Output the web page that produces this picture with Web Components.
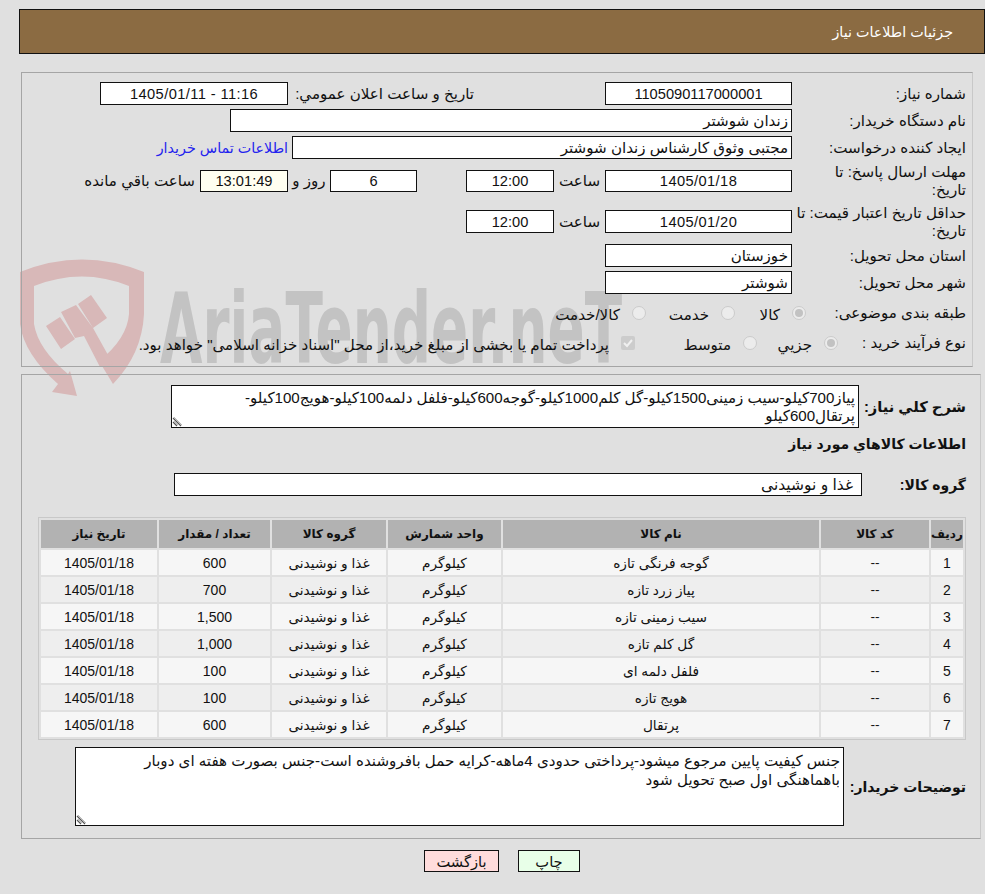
<!DOCTYPE html>
<html lang="fa" dir="rtl">
<head>
<meta charset="utf-8">
<title>جزئیات اطلاعات نیاز</title>
<style>
html, body { margin: 0; background: #e0e0e0; }
body { width: 985px; height: 894px; overflow: hidden; }
</style>
</head>
<body>
<need-page></need-page>

<script>
const FONT = '"Liberation Sans", "DejaVu Sans", "Noto Sans", sans-serif';

class TitleBar extends HTMLElement {
    constructor() {
        super();
        this.attachShadow({ mode: 'open' });
        this.shadowRoot.innerHTML = `
            <style>
                :host { display: flex; align-items: center; box-sizing: border-box; height: 45px; margin: 9px 0 0 19px; padding-right: 31px; background: #8b6b42; border: 1px solid #111; color: #fff; font-size: 14.3px; }
            </style>
            <slot></slot>`;
    }
}

class PanelBox extends HTMLElement {
    constructor() {
        super();
        this.attachShadow({ mode: 'open' });
        this.shadowRoot.innerHTML = `
            <style>
                :host { display: block; box-sizing: border-box; border: 1px solid #a5a5a5; border-right-color: #c8c8c8; }
            </style>
            <slot></slot>`;
    }
}

class FieldBox extends HTMLElement {
    constructor() {
        super();
        this.attachShadow({ mode: 'open' });
        this.shadowRoot.innerHTML = `
            <style>
                :host { display: flex; align-items: center; justify-content: center; box-sizing: border-box; background: #fff; border: 1px solid #111; height: 23px; flex: none; white-space: nowrap; }
                :host([start]) { justify-content: flex-start; padding-right: 3px; }
                :host([warm]) { background: #fffff0; }
                :host([num]) { font-size: 14.67px; }
                :host([date]) { font-size: 14.67px; letter-spacing: .4px; }
            </style>
            <slot></slot>`;
    }
    connectedCallback() {
        if (this.hasAttribute('w')) this.style.width = this.getAttribute('w') + 'px';
    }
}

class ResizeArea extends HTMLElement {
    constructor() {
        super();
        this.attachShadow({ mode: 'open' });
        this.shadowRoot.innerHTML = `
            <style>
                :host { display: block; position: relative; box-sizing: border-box; background: #fff; border: 1px solid #111; padding: 3px; font-size: 15.1px; line-height: 18px; flex: none; white-space: nowrap; }
                svg { position: absolute; left: 0; bottom: 0; }
            </style>
            <slot></slot>
            <svg width="11" height="11" viewBox="0 0 11 11"><path d="M1 2l8 8M1 6l4 4" stroke="#555" stroke-width="1.2" fill="none"/><path d="M2 1l8 8M2 5l4 4" stroke="#bbb" stroke-width="1" fill="none"/></svg>`;
    }
}

class RadioMark extends HTMLElement {
    constructor() {
        super();
        this.attachShadow({ mode: 'open' });
        this.shadowRoot.innerHTML = `
            <style>
                :host { display: inline-block; box-sizing: border-box; width: 14px; height: 14px; flex: none; border-radius: 50%; border: 1px solid #cbcbcb; background: #ececec; position: relative; }
                :host([on])::after { content: ""; position: absolute; inset: 2px; border-radius: 50%; background: #c2c2c2; }
            </style>`;
    }
}

class CheckMark extends HTMLElement {
    constructor() {
        super();
        this.attachShadow({ mode: 'open' });
        this.shadowRoot.innerHTML = `
            <style>
                :host { display: inline-block; width: 14px; height: 14px; flex: none; }
                svg { display: block; }
            </style>
            <svg width="14" height="14" viewBox="0 0 14 14"><rect width="14" height="14" rx="2" fill="#cccccc"/><path d="M3 7l3 3 5-6" stroke="#f0f0f0" stroke-width="2" fill="none"/></svg>`;
    }
}

// logo behind the form, it overlaps both panels
class WaterMark extends HTMLElement {
    constructor() {
        super();
        this.attachShadow({ mode: 'open' });
        this.shadowRoot.innerHTML = `
            <style>
                :host { display: block; position: absolute; left: 0; top: 0; z-index: -1; width: 640px; height: 400px; }
                svg { display: block; }
                .name { position: absolute; left: 160px; top: 265px; direction: ltr; white-space: nowrap; color: #c3c3c3; font: bold 98px/110px "DejaVu Sans", sans-serif; transform-origin: 0 0; transform: scaleX(.56); }
            </style>
            <svg width="640" height="400" viewBox="0 0 640 400">
                <path fill="#d8b8b8" fill-rule="evenodd" d="M20 263Q82 238 144 263V305Q142 345 113 375L99 352Q127 330 129 305V277Q82 258 34 277V315Q38 340 68 365L70 362L77 387L52 383L58 375Q24 345 20 315Z"/>
                <path fill="#d8b8b8" d="M46 317L60 308L75 330L61 340ZM61 303L76 296L93 319L113 355L100 358L84 327L75 329ZM78 295L91 286L107 309L93 319Z"/>
            </svg>
            <div class="name">AriaTender.neT</div>`;
    }
}

class GoodsTable extends HTMLElement {
    constructor() {
        super();
        this.attachShadow({ mode: 'open' });
        const rows = [
            ['1', 'گوجه فرنگی تازه', '600'],
            ['2', 'پیاز زرد تازه', '700'],
            ['3', 'سیب زمینی تازه', '1,500'],
            ['4', 'گل کلم تازه', '1,000'],
            ['5', 'فلفل دلمه ای', '100'],
            ['6', 'هویج تازه', '100'],
            ['7', 'پرتقال', '600']
        ];
        const body = rows.map((r, i) => `
            <tr class="${i % 2 ? 'even' : 'odd'}">
                <td class="n">${r[0]}</td><td>--</td><td>${r[1]}</td><td>کیلوگرم</td><td>غذا و نوشیدنی</td><td class="n">${r[2]}</td><td class="n">1405/01/18</td>
            </tr>`).join('');
        this.shadowRoot.innerHTML = `
            <style>
                :host { display: block; box-sizing: border-box; width: 928px; border: 1px solid #c8c8c8; }
                table { width: 100%; border-collapse: separate; border-spacing: 2px; table-layout: fixed; font-size: 13.7px; }
                th { background: #b2b2b2; height: 28px; padding: 0; font-size: 12px; font-weight: bold; }
                td { height: 25px; padding: 0; text-align: center; }
                td.n { font-size: 14px; }
                .odd td { background: #f6f6f6; }
                .even td { background: #eeeeee; }
            </style>
            <table>
                <colgroup><col style="width:32px"><col style="width:108px"><col style="width:316px"><col style="width:113px"><col style="width:114px"><col style="width:111px"><col></colgroup>
                <tr><th>رديف</th><th>کد کالا</th><th>نام کالا</th><th>واحد شمارش</th><th>گروه کالا</th><th>تعداد / مقدار</th><th>تاريخ نياز</th></tr>
                ${body}
            </table>`;
    }
}

class NeedPage extends HTMLElement {
    constructor() {
        super();
        this.attachShadow({ mode: 'open' });
        this.shadowRoot.innerHTML = `
            <style>
                :host { display: block; position: relative; z-index: 0; font-family: ${FONT}; font-size: 15.1px; color: #111; }
                .top { margin: 18px 12px 0 21px; height: 295px; padding-top: 9px; }
                .row { display: flex; align-items: center; height: 23px; margin-bottom: 4px; }
                .lab { width: 180px; flex: none; padding-right: 6px; box-sizing: border-box; line-height: 18px; white-space: nowrap; }
                .txt { flex: none; white-space: nowrap; }
                a { color: #2323ee; text-decoration: none; font-size: 14.3px; }
                .opt { display: flex; align-items: center; gap: 12px; flex: none; }
                .opt span { position: relative; top: 2px; white-space: nowrap; }
                .bottom { margin: 7px 4px 0 21px; height: 465px; padding: 10px 14px 0 0; font-size: 14px; }
                .bottom .row { margin-bottom: 0; }
                .lab2 { flex: none; font-weight: bold; white-space: nowrap; }
                .actions { display: flex; justify-content: center; gap: 19px; margin-top: 11px; padding-left: 19px; direction: ltr; }
                .btn { box-sizing: border-box; height: 22px; border: 1px solid #111; font-size: 14.67px; display: flex; align-items: center; justify-content: center; direction: rtl; }
            </style>

            <water-mark></water-mark>
            <title-bar>جزئیات اطلاعات نیاز</title-bar>

            <panel-box class="top">
                <div class="row">
                    <div class="lab">شماره نیاز:</div>
                    <field-box w="187" num>1105090117000001</field-box>
                    <span class="txt" style="width:186px;margin-right:131px">تاریخ و ساعت اعلان عمومي:</span>
                    <field-box w="188" date><span dir="ltr">1405/01/11 - 11:16</span></field-box>
                </div>
                <div class="row">
                    <div class="lab">نام دستگاه خریدار:</div>
                    <field-box w="562" start>زندان شوشتر</field-box>
                </div>
                <div class="row" style="margin-bottom:11px">
                    <div class="lab">ایجاد کننده درخواست:</div>
                    <field-box w="500" start>مجتبی وثوق کارشناس زندان شوشتر</field-box>
                    <a class="txt" style="margin-right:4px" href="#">اطلاعات تماس خریدار</a>
                </div>
                <div class="row" style="height:22px;margin-bottom:18px">
                    <div class="lab">مهلت ارسال پاسخ: تا<br>تاریخ:</div>
                    <field-box w="187" date style="height:22px">1405/01/18</field-box>
                    <span class="txt" style="width:51px;text-align:center">ساعت</span>
                    <field-box w="88" num style="height:22px">12:00</field-box>
                    <span style="width:49px;flex:none"></span>
                    <field-box w="87" num style="height:22px">6</field-box>
                    <span class="txt" style="width:42px;text-align:center">روز و</span>
                    <field-box w="88" num warm style="height:22px">13:01:49</field-box>
                    <span class="txt" style="margin-right:5px">ساعت باقي مانده</span>
                </div>
                <div class="row" style="margin-bottom:11px">
                    <div class="lab">حداقل تاریخ اعتبار قیمت: تا<br>تاریخ:</div>
                    <field-box w="187" date>1405/01/20</field-box>
                    <span class="txt" style="width:51px;text-align:center">ساعت</span>
                    <field-box w="88" num>12:00</field-box>
                </div>
                <div class="row">
                    <div class="lab">استان محل تحویل:</div>
                    <field-box w="187" start>خوزستان</field-box>
                </div>
                <div class="row" style="margin-bottom:7px">
                    <div class="lab">شهر محل تحویل:</div>
                    <field-box w="187" start>شوشتر</field-box>
                </div>
                <div class="row" style="margin-bottom:7px">
                    <div class="lab" style="width:166px">طبقه بندی موضوعی:</div>
                    <div class="opt" style="width:71px"><radio-mark on></radio-mark><span>کالا</span></div>
                    <div class="opt" style="width:89px"><radio-mark></radio-mark><span>خدمت</span></div>
                    <div class="opt"><radio-mark></radio-mark><span>کالا/خدمت</span></div>
                </div>
                <div class="row">
                    <div class="lab" style="width:134px">نوع فرآیند خرید :</div>
                    <div class="opt" style="width:81px"><radio-mark on></radio-mark><span>جزیي</span></div>
                    <div class="opt" style="width:122px"><radio-mark></radio-mark><span>متوسط</span></div>
                    <div class="opt"><check-mark></check-mark><span>پرداخت تمام یا بخشی از مبلغ خرید،از محل "اسناد خزانه اسلامی" خواهد بود.</span></div>
                </div>
            </panel-box>

            <panel-box class="bottom">
                <div class="row" style="height:43px">
                    <div class="lab2" style="width:107px;font-size:14.7px">شرح کلي نیاز:</div>
                    <resize-area style="width:688px;height:43px">پیاز700کیلو-سیب زمینی1500کیلو-گل کلم1000کیلو-گوجه600کیلو-فلفل دلمه100کیلو-هویج100کیلو-<br>پرتقال600کیلو</resize-area>
                </div>
                <div class="row" style="height:20px;margin-top:6px"><div class="lab2">اطلاعات کالاهاي مورد نياز</div></div>
                <div class="row" style="margin-top:19px">
                    <div class="lab2" style="width:104px">گروه کالا:</div>
                    <field-box w="688" start style="padding-right:8px;font-size:15.5px">غذا و نوشیدنی</field-box>
                </div>
                <goods-table style="margin-top:21px"></goods-table>
                <div class="row" style="height:79px;margin-top:7px">
                    <div class="lab2" style="width:122px">توضیحات خریدار:</div>
                    <resize-area style="width:769px;height:79px;line-height:19px">جنس کیفیت پایین مرجوع میشود-پرداختی حدودی 4ماهه-کرایه حمل بافروشنده است-جنس بصورت هفته ای دوبار<br>باهماهنگی اول صبح تحویل شود</resize-area>
                </div>
            </panel-box>

            <div class="actions">
                <div class="btn" style="width:75px;background:#ffdcdc">بازگشت</div>
                <div class="btn" style="width:62px;background:#e8ffe8">چاپ</div>
            </div>`;
    }
}

customElements.define('title-bar', TitleBar);
customElements.define('panel-box', PanelBox);
customElements.define('field-box', FieldBox);
customElements.define('resize-area', ResizeArea);
customElements.define('radio-mark', RadioMark);
customElements.define('check-mark', CheckMark);
customElements.define('water-mark', WaterMark);
customElements.define('goods-table', GoodsTable);
customElements.define('need-page', NeedPage);
</script>
</body>
</html>
